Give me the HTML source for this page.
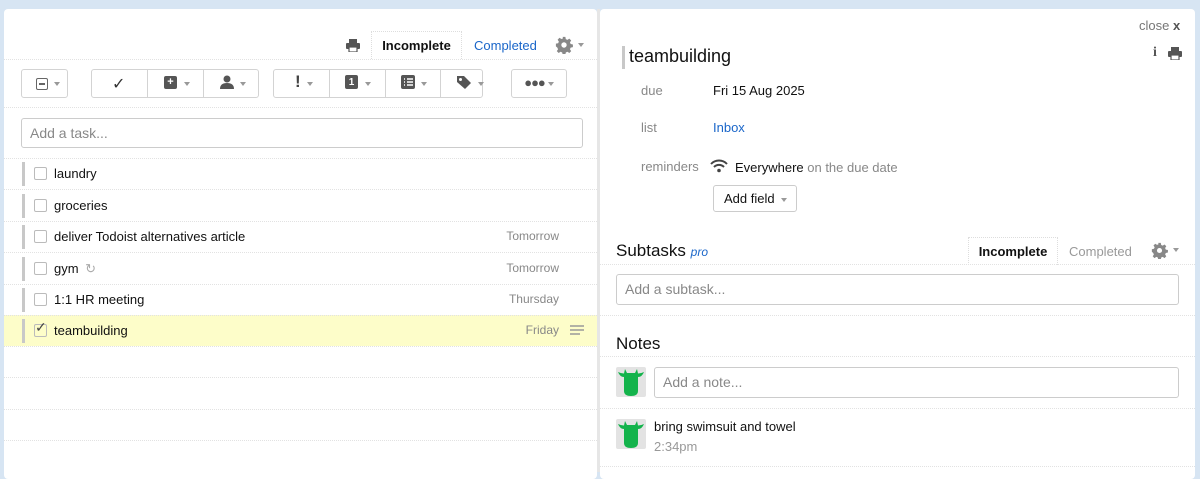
<!DOCTYPE html>
<html><head><style>
*{box-sizing:border-box;margin:0;padding:0}
body{width:1200px;height:472px;background:#d7e5f3;font-family:"Liberation Sans",sans-serif;position:relative;overflow:hidden;font-size:13px;color:#111}
.a{position:absolute}
.panel{position:absolute;background:#fff;top:9px;height:470px;border-radius:4px}
.hl{position:absolute;height:0;border-top:1px dotted #e2e2e2}
.btn{position:absolute;top:69px;height:29px;border:1px solid #d3d3d3;border-radius:3px;background:#fff}
.sep{position:absolute;top:69px;height:29px;border-left:1px solid #d3d3d3}
.car{display:inline-block;width:0;height:0;border-left:3px solid transparent;border-right:3px solid transparent;border-top:4px solid #999;vertical-align:middle;margin-left:4px}
.inp{position:absolute;border:1px solid #ccc;border-radius:3px;background:#fff;color:#888;font-size:14px;padding-left:8px}
.row{position:absolute;left:4px;width:593px;height:31px}
.bar{position:absolute;left:18px;top:4px;width:3px;height:24px;background:#c8c8c8}
.cb{position:absolute;left:30px;top:9px;width:13px;height:13px;border:1px solid #bbb;border-radius:2px;background:#fff}
.tt{position:absolute;left:50px;top:8px;font-size:13px;color:#111}
.dd{position:absolute;right:38px;top:8px;font-size:12px;color:#888}
.lbl{position:absolute;left:641px;color:#888;font-size:13px}
.av{position:absolute;width:30px;height:30px;background:#e3e3e3;border-radius:2px}
</style></head><body>
<svg width="0" height="0" style="position:absolute"><defs>
<symbol id="gear" viewBox="0 0 20 20"><path d="M8.5 1h3l.5 2.5 1.8.8 2.1-1.4 2.1 2.1-1.4 2.1.8 1.8 2.5.5v3l-2.5.5-.8 1.8 1.4 2.1-2.1 2.1-2.1-1.4-1.8.8-.5 2.5h-3l-.5-2.5-1.8-.8-2.1 1.4-2.1-2.1 1.4-2.1-.8-1.8L1 11.5v-3l2.5-.5.8-1.8-1.4-2.1 2.1-2.1 2.1 1.4 1.8-.8z" fill="#888"/><circle cx="10" cy="10" r="3" fill="#fff"/></symbol>
<symbol id="cow" viewBox="0 0 30 30"><path d="M2 5 Q4 10 8 10 L8 24 Q8 29 15 29 Q22 29 22 24 L22 10 Q26 10 28 5 Q25 6.5 22 6.5 L21 2 L19 6 L11 6 L9 2 L8 6.5 Q5 6.5 2 5Z" fill="#13b34b"/></symbol>
</defs></svg>
<div class="panel" style="left:4px;width:593px"></div>
<div class="panel" style="left:600px;width:595px"></div>
<div class="a" style="left:597px;top:9px;width:3px;height:463px;background:#e6e6e6"></div>

<svg class="a" style="left:346px;top:39px" width="14" height="13" viewBox="0 0 14 13"><rect x="3" y="0" width="8" height="4" fill="#555"/><rect x="0" y="4" width="14" height="6" rx="1" fill="#555"/><rect x="3" y="8" width="8" height="5" fill="#fff" stroke="#555" stroke-width="1.2"/></svg>
<div class="a" style="left:371px;top:31px;width:91px;height:28px;border:1px dotted #ddd;border-bottom:none;background:#fff;font-weight:bold;font-size:13px;text-align:center;line-height:28px">Incomplete</div>
<div class="a" style="left:474px;top:38px;color:#1a66c9;font-size:13px">Completed</div>
<svg class="a" style="left:555px;top:36px" width="18" height="18"><use href="#gear"/></svg><span class="car a" style="left:574px;top:43px"></span>
<div class="hl" style="left:4px;top:59px;width:593px"></div>

<div class="btn" style="left:21px;width:47px"><div class="a" style="left:14px;top:8px;width:12px;height:12px;border:1px solid #666;border-radius:2px"><div class="a" style="left:2px;top:4px;width:6px;height:2px;background:#666"></div></div><span class="car a" style="left:28px;top:12px"></span></div>
<div class="btn" style="left:91px;width:168px"></div>
<div class="sep" style="left:147px"></div><div class="sep" style="left:203px"></div>
<div class="a" style="left:112px;top:74px;font-size:16px;color:#333">✓</div>
<div class="a" style="left:164px;top:76px;width:13px;height:13px;background:#555;border-radius:2px;color:#fff;font-size:11px;line-height:13px;text-align:center;font-weight:bold">+</div><span class="car a" style="left:180px;top:82px"></span>
<svg class="a" style="left:219px;top:75px" width="16" height="14"><circle cx="8" cy="4" r="3.5" fill="#555"/><path d="M1 14 Q1 8 8 8 Q15 8 15 14Z" fill="#555"/></svg><span class="car a" style="left:236px;top:82px"></span>
<div class="btn" style="left:273px;width:210px"></div>
<div class="sep" style="left:329px"></div><div class="sep" style="left:385px"></div><div class="sep" style="left:440px"></div>
<div class="a" style="left:295px;top:72px;font-size:17px;font-weight:bold;color:#444">!</div><span class="car a" style="left:303px;top:82px"></span>
<div class="a" style="left:345px;top:75px;width:13px;height:14px;background:#555;border-radius:2px;color:#fff;font-size:10px;line-height:15px;text-align:center;font-weight:bold">1</div><span class="car a" style="left:361px;top:82px"></span>
<svg class="a" style="left:401px;top:75px" width="14" height="14"><rect width="14" height="14" rx="2" fill="#555"/><path d="M3 4h1M6 4h6M3 7h1M6 7h6M3 10h1M6 10h6" stroke="#fff" stroke-width="1.5"/></svg><span class="car a" style="left:417px;top:82px"></span>
<svg class="a" style="left:456px;top:75px" width="16" height="15"><path d="M1 1h7l7 7-6 6-8-7z" fill="#555"/><circle cx="4.5" cy="4.5" r="1.5" fill="#fff"/></svg><span class="car a" style="left:474px;top:82px"></span>
<div class="btn" style="left:511px;width:56px;text-align:center;font-size:13px;line-height:25px;color:#555;letter-spacing:-1px">●●●<span class="car" style="margin-left:3px"></span></div>
<div class="hl" style="left:4px;top:107px;width:593px"></div>
<div class="inp" style="left:21px;top:118px;width:562px;height:30px;line-height:28px">Add a task...</div>
<div class="hl" style="left:4px;top:158px;width:593px"></div>

<div class="row" style="top:158px"><div class="bar"></div><div class="cb"></div><div class="tt">laundry</div></div>
<div class="hl" style="left:4px;top:189px;width:593px"></div>
<div class="row" style="top:190px"><div class="bar"></div><div class="cb"></div><div class="tt">groceries</div></div>
<div class="hl" style="left:4px;top:221px;width:593px"></div>
<div class="row" style="top:221px"><div class="bar"></div><div class="cb"></div><div class="tt">deliver Todoist alternatives article</div><div class="dd">Tomorrow</div></div>
<div class="hl" style="left:4px;top:252px;width:593px"></div>
<div class="row" style="top:253px"><div class="bar"></div><div class="cb"></div><div class="tt">gym <span style="color:#aaa;font-size:13px;margin-left:3px">↻</span></div><div class="dd">Tomorrow</div></div>
<div class="hl" style="left:4px;top:284px;width:593px"></div>
<div class="row" style="top:284px"><div class="bar"></div><div class="cb"></div><div class="tt">1:1 HR meeting</div><div class="dd">Thursday</div></div>
<div class="row" style="top:315px;background:#fdfdc9"><div class="bar"></div><div class="cb" style="background:transparent"></div><div class="a" style="left:31px;top:4px;font-size:14px;color:#444">✓</div><div class="tt">teambuilding</div><div class="dd" style="right:38px">Friday</div>
<svg class="a" style="left:566px;top:10px" width="14" height="11"><path d="M0 1h14M0 5h14M0 9h10" stroke="#999" stroke-width="1.5"/></svg></div>
<div class="hl" style="left:4px;top:315px;width:593px"></div>
<div class="hl" style="left:4px;top:346px;width:593px"></div>
<div class="hl" style="left:4px;top:377px;width:593px"></div>
<div class="hl" style="left:4px;top:409px;width:593px"></div>
<div class="hl" style="left:4px;top:440px;width:593px"></div>

<div class="a" style="left:1139px;top:18px;color:#777;font-size:13px">close <b style="color:#555">x</b></div>
<div class="a" style="left:622px;top:46px;width:3px;height:23px;background:#c8c8c8"></div>
<div class="a" style="left:629px;top:46px;font-size:18px;color:#111">teambuilding</div>
<div class="a" style="left:1153px;top:45px;font-size:14px;font-weight:bold;color:#555;font-family:'Liberation Serif',serif">i</div>
<svg class="a" style="left:1168px;top:47px" width="14" height="13" viewBox="0 0 14 13"><rect x="3" y="0" width="8" height="4" fill="#555"/><rect x="0" y="4" width="14" height="6" rx="1" fill="#555"/><rect x="3" y="8" width="8" height="5" fill="#fff" stroke="#555" stroke-width="1.2"/></svg>
<div class="lbl" style="top:83px">due</div><div class="a" style="left:713px;top:83px">Fri 15 Aug 2025</div>
<div class="lbl" style="top:120px">list</div><div class="a" style="left:713px;top:120px;color:#1a66c9">Inbox</div>
<div class="lbl" style="top:159px">reminders</div>
<svg class="a" style="left:710px;top:159px" width="18" height="14"><path d="M1 5a11 11 0 0 1 16 0M4 8a7 7 0 0 1 10 0" stroke="#444" stroke-width="2" fill="none"/><circle cx="9" cy="11.5" r="1.8" fill="#444"/></svg>
<div class="a" style="left:735px;top:160px">Everywhere <span style="color:#888">on the due date</span></div>
<div class="a" style="left:713px;top:185px;width:84px;height:27px;border:1px solid #ccc;border-radius:3px;line-height:25px;padding-left:10px;font-size:13px">Add field<span class="car" style="margin-left:6px"></span></div>

<div class="a" style="left:616px;top:241px;font-size:17px">Subtasks <span style="color:#1a66c9;font-style:italic;font-size:12px">pro</span></div>
<div class="a" style="left:968px;top:237px;width:90px;height:28px;border:1px dotted #ddd;border-bottom:none;background:#fff;font-weight:bold;text-align:center;line-height:28px">Incomplete</div>
<div class="a" style="left:1069px;top:244px;color:#999">Completed</div>
<svg class="a" style="left:1151px;top:242px" width="17" height="17"><use href="#gear"/></svg><span class="car a" style="left:1169px;top:248px"></span>
<div class="hl" style="left:600px;top:264px;width:595px"></div>
<div class="inp" style="left:616px;top:274px;width:563px;height:31px;line-height:29px">Add a subtask...</div>
<div class="hl" style="left:600px;top:315px;width:595px"></div>
<div class="a" style="left:616px;top:334px;font-size:17px">Notes</div>
<div class="hl" style="left:600px;top:356px;width:595px"></div>
<svg class="av" style="left:616px;top:367px" width="30" height="30"><use href="#cow"/></svg>
<div class="inp" style="left:654px;top:367px;width:525px;height:31px;line-height:29px">Add a note...</div>
<div class="hl" style="left:600px;top:408px;width:595px"></div>
<svg class="av" style="left:616px;top:419px" width="30" height="30"><use href="#cow"/></svg>
<div class="a" style="left:654px;top:419px">bring swimsuit and towel</div>
<div class="a" style="left:654px;top:439px;color:#999">2:34pm</div>
<div class="hl" style="left:600px;top:466px;width:595px"></div>
</body></html>
